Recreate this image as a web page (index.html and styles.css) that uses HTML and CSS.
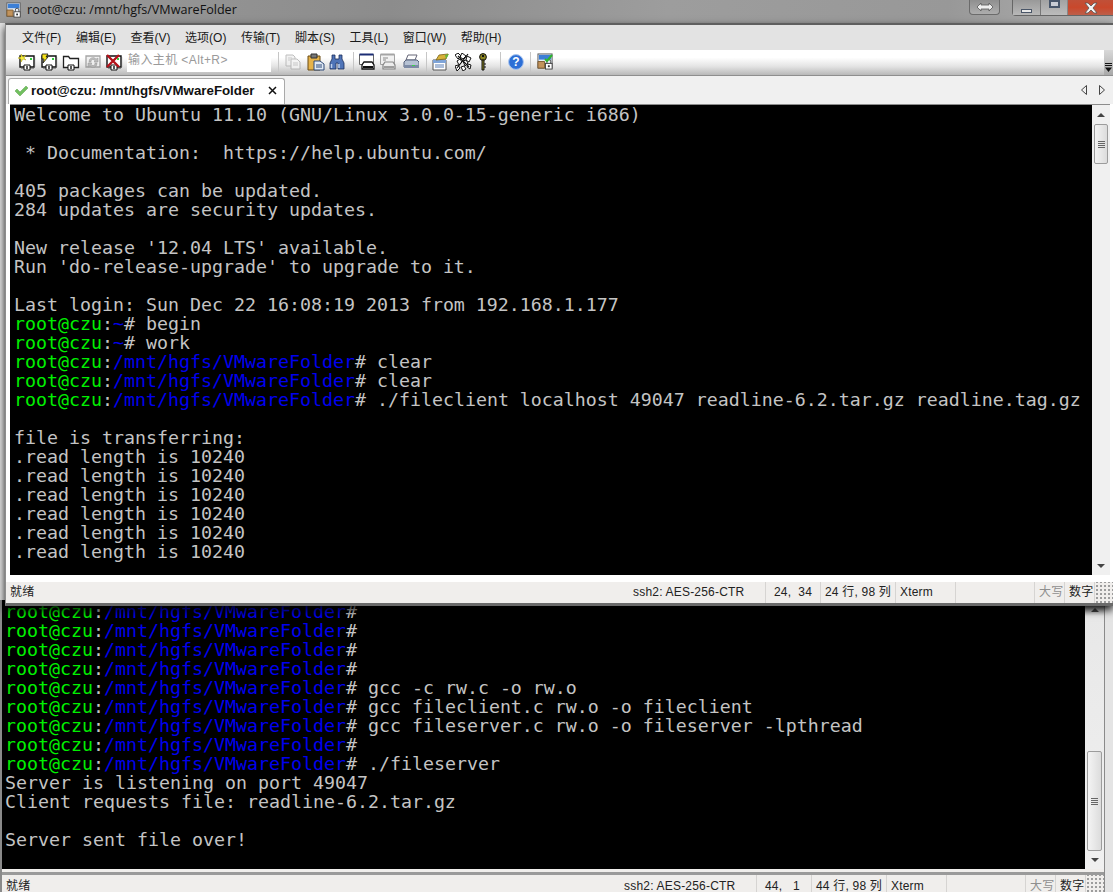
FILE: index.html
```html
<!DOCTYPE html>
<html lang="zh">
<head>
<meta charset="utf-8">
<title>root@czu: /mnt/hgfs/VMwareFolder</title>
<link rel="stylesheet" href="styles.css">
</head>
<body>
<svg class="defs" width="0" height="0" aria-hidden="true">
  <symbol id="host" viewBox="0 0 18 18">
    <path d="M2 3h14v11H2z" fill="#fff" stroke="#111" stroke-width="1.4"/>
    <path d="M16.500 4v10M3 15h13" stroke="#555" stroke-width="1.2"/>
    <rect x="12" y="5" width="2" height="2" fill="#2fce3c"/>
    <path d="M6 12h6v5H6z" fill="#fff" stroke="#111"/>
    <path d="M9 13v3" stroke="#111" stroke-width="1.400"/>
  </symbol>
  <symbol id="folderhost" viewBox="0 0 18 18">
    <path d="M1.500 3.500h5l1.500 2h8.500v9h-15z" fill="#fff" stroke="#222" stroke-width="1.300"/>
    <path d="M6 12h6v5H6z" fill="#fff" stroke="#111"/>
    <path d="M9 13v3" stroke="#111" stroke-width="1.400"/>
  </symbol>
  <symbol id="lockwin" viewBox="0 0 18 18">
    <rect x="1" y="1" width="15" height="15" fill="#e8eef6" stroke="#5b5b5b"/>
    <rect x="2" y="2" width="13" height="5" fill="#3c7fd6"/>
    <path d="M1 9h7v7H1z" fill="#c2935c" stroke="#7b5a30"/>
    <rect x="9" y="11" width="7" height="6" fill="#fff" stroke="#444"/>
    <path d="M10.500 11V9a2 2 0 0 1 4 0v2" fill="none" stroke="#444"/>
    <rect x="11.500" y="13" width="2" height="2" fill="#333"/>
  </symbol>
</svg>

<main class="desktop">
  <section class="window window-back">
    <div class="term-area term-area-back">
      <pre class="term term-back"><span class="g">root@czu</span>:<span class="b">/mnt/hgfs/VMwareFolder</span>#
<span class="g">root@czu</span>:<span class="b">/mnt/hgfs/VMwareFolder</span>#
<span class="g">root@czu</span>:<span class="b">/mnt/hgfs/VMwareFolder</span>#
<span class="g">root@czu</span>:<span class="b">/mnt/hgfs/VMwareFolder</span>#
<span class="g">root@czu</span>:<span class="b">/mnt/hgfs/VMwareFolder</span># gcc -c rw.c -o rw.o
<span class="g">root@czu</span>:<span class="b">/mnt/hgfs/VMwareFolder</span># gcc fileclient.c rw.o -o fileclient
<span class="g">root@czu</span>:<span class="b">/mnt/hgfs/VMwareFolder</span># gcc fileserver.c rw.o -o fileserver -lpthread
<span class="g">root@czu</span>:<span class="b">/mnt/hgfs/VMwareFolder</span>#
<span class="g">root@czu</span>:<span class="b">/mnt/hgfs/VMwareFolder</span># ./fileserver
Server is listening on port 49047
Client requests file: readline-6.2.tar.gz

Server sent file over!</pre>
      <div class="scrollbar scrollbar-back">
        <span class="arrow-up"></span>
        <div class="track track-back"><div class="thumb thumb-back"><i></i><i></i><i></i><i></i></div></div>
        <span class="arrow-down"></span>
      </div>
    </div>
    <footer class="status status-back">
      <span class="cell cell-main">就绪</span>
      <span class="cell cell-ssh">ssh2: AES-256-CTR</span>
      <span class="cell cell-pos">44,&nbsp;&nbsp;&nbsp;1</span>
      <span class="cell cell-size">44 行, 98 列</span>
      <span class="cell cell-term">Xterm</span>
      <span class="cell cell-gap"></span>
      <span class="cell cell-key muted">大写</span>
      <span class="cell cell-key">数字</span>
      <span class="grip"></span>
    </footer>
  </section>

  <header class="titlebar">
    <svg class="title-icon" width="16" height="16"><use href="#lockwin"/></svg>
    <span class="title-text">root@czu: /mnt/hgfs/VMwareFolder</span>
    <span class="spacer"></span>
    <span class="capbtn capbtn-resize">
      <svg width="18" height="10" viewBox="0 0 18 10"><path d="M1 5l4-4v2h8V1l4 4-4 4V7H5v2z" fill="#eee" stroke="#555" stroke-width=".8"/></svg>
    </span>
    <span class="capgroup">
      <span class="capbtn capbtn-min"><i></i></span>
      <span class="capbtn capbtn-max"><i></i></span>
      <span class="capbtn capbtn-close">
        <svg width="14" height="12" viewBox="0 0 14 12"><path d="M1 1h3l3 3 3-3h3L9 6l4 5h-3L7 8l-3 3H1l4-5z" fill="#f4f4f4" stroke="#555" stroke-width=".8"/></svg>
      </span>
    </span>
  </header>

  <section class="window window-front">
    <nav class="menubar">
      <span>文件(F)</span><span>编辑(E)</span><span>查看(V)</span><span>选项(O)</span><span>传输(T)</span><span>脚本(S)</span><span>工具(L)</span><span>窗口(W)</span><span>帮助(H)</span>
    </nav>
    <div class="toolbar">
      <svg class="ic" width="18" height="18"><use href="#host"/><path d="M3 1l2 3 3-2-2 3 2 2-3-1-2 3V6L0 5l3-1z" fill="#f7ef3a" stroke="#a89a10" stroke-width=".5"/></svg>
      <svg class="ic ic-2" width="18" height="18"><use href="#host"/><path d="M2 1h6L6 4h2L3 10l1-4H2z" fill="#f6e21c" stroke="#111" stroke-width=".8"/></svg>
      <svg class="ic ic-3" width="18" height="18"><use href="#folderhost"/></svg>
      <svg class="ic ic-4 dim" width="18" height="18" viewBox="0 0 18 18"><path d="M2 3h14v11H2z" fill="#eee" stroke="#888" stroke-width="1.300"/><path d="M5 9a4 4 0 0 1 7-3l2-1v4h-4l1-1a2 2 0 0 0-4 1zM13 10a4 4 0 0 1-7 3l-2 1v-4h4l-1 1a2 2 0 0 0 4-1z" fill="#aaa" stroke="#777" stroke-width=".5"/></svg>
      <svg class="ic ic-5" width="18" height="18"><use href="#host"/><path d="M2 2l12 12M14 2L2 14" stroke="#b5121b" stroke-width="2.400"/></svg>
      <span class="hostbox">输入主机 &lt;Alt+R&gt;</span>
      <span class="sep sep-a"></span>
      <svg class="ic ic-copy dim" width="16" height="16" viewBox="0 0 16 16"><path d="M1 1h7l2 2v9H1z" fill="#eee" stroke="#aaa"/><path d="M6 5h6l3 3v7H6z" fill="#f4f4f4" stroke="#aaa"/><path d="M3 4h4M3 6h2M8 9h5M8 11h5" stroke="#bbb"/></svg>
      <svg class="ic ic-paste" width="18" height="18" viewBox="0 0 18 18"><path d="M1 3h12v14H1z" fill="#e5b24a" stroke="#6a4a12"/><path d="M4 1h6v4H4z" fill="#777" stroke="#333"/><path d="M7 8h6l4 3v6H7z" fill="#dfe8f4" stroke="#2f4b78"/><path d="M9 12h6M9 14h6" stroke="#2f4b78"/></svg>
      <svg class="ic ic-find" width="16" height="16" viewBox="0 0 16 16"><path d="M3 1h3v4h4V1h3v4l2 4v6H9V9H7v6H1V9l2-4z" fill="#4f74b8" stroke="#1d2f5a" stroke-width=".8"/><path d="M2.500 10v4M10 10v4" stroke="#bcd0ef" stroke-width="1.500"/></svg>
      <span class="sep sep-b"></span>
      <svg class="ic ic-print1" width="17" height="18" viewBox="0 0 17 18"><path d="M.5 1.500h14v10H.5z" fill="#fff" stroke="#666"/><path d="M.5 1.500h14" stroke="#1b2c74" stroke-width="2"/><path d="M5 9h8l2 3v4H3v-4z" fill="#fff" stroke="#111" stroke-width="1.300"/><path d="M4 14h10" stroke="#111" stroke-width="2"/></svg>
      <svg class="ic ic-print2 dim" width="17" height="18" viewBox="0 0 17 18"><path d="M.5 1.500h14v10H.5z" fill="#eee" stroke="#888"/><path d="M.5 1.500h14" stroke="#888" stroke-width="2"/><path d="M3 5h5M3 7h3" stroke="#666"/><path d="M5 9h8l2 3v4H3v-4z" fill="#eee" stroke="#666" stroke-width="1.200"/><path d="M4 14h10" stroke="#666" stroke-width="1.500"/></svg>
      <svg class="ic ic-print3" width="16" height="16" viewBox="0 0 16 16"><path d="M5 1h9l-2 5H3z" fill="#fff" stroke="#667"/><path d="M3 6h11l2 2v5H1V8z" fill="#b6c2d4" stroke="#55607a"/><path d="M1 11h15v3H1z" fill="#7d8ba6"/><rect x="9" y="11" width="3" height="1" fill="#3bd04a"/></svg>
      <span class="sep sep-c"></span>
      <svg class="ic ic-options" width="18" height="18" viewBox="0 0 18 18"><path d="M1 7h13v10H1z" fill="#fff" stroke="#555"/><path d="M1 7h13v3H1z" fill="#7fa4d8"/><path d="M3 12h9M3 14h9" stroke="#5a7fb5"/><path d="M4 7l3-5 9-1-2 5z" fill="#d8b23a" stroke="#7a6218" stroke-width=".8"/><path d="M13 2l4-1-3 5z" fill="#66b53a"/></svg>
      <svg class="ic ic-keys" width="17" height="18" viewBox="0 0 17 18"><path d="M0 2l3-2 3 3-3 3zM7 0l4 3-3 3-3-2zM12 3l4 2-2 4-3-2zM2 8l3-2 2 3-3 3zM8 8l3-1 2 3-3 3zM13 11l3 1-1 4-3-2zM0 13l3-1 2 3-3 3zM6 14l3-1 2 3-3 2z" fill="#fff" stroke="#111"/><path d="M3 3l11 11M13 1L2 15" stroke="#111" stroke-width="1.200"/></svg>
      <svg class="ic ic-key" width="8" height="18" viewBox="0 0 8 18"><circle cx="4" cy="4" r="3.400" fill="#8a8420" stroke="#111"/><rect x="3" y="2" width="2" height="2" fill="#111"/><path d="M3 7h2v10H3zM5 11h2M5 14h2" fill="#8a8420" stroke="#111"/></svg>
      <span class="sep sep-d"></span>
      <svg class="ic ic-help" width="16" height="16" viewBox="0 0 16 16"><circle cx="8" cy="8" r="7.400" fill="#2d6fd6" stroke="#a9c4ee"/><text x="8" y="12" class="help-q">?</text></svg>
      <span class="sep sep-e"></span>
      <svg class="ic ic-last" width="17" height="17"><use href="#lockwin"/><path d="M8 6l2 2 5-6" fill="none" stroke="#2cb62c" stroke-width="2"/></svg>
      <span class="spacer"></span>
      <span class="chevron">
        <svg width="9" height="10" viewBox="0 0 9 10"><path d="M1 .5h7M1 2.500h7" stroke="#111"/><path d="M1 4.500h7L4.500 9z" fill="#111"/></svg>
      </span>
    </div>
    <div class="tabrow">
      <div class="tab">
        <svg class="tab-check" width="15" height="12" viewBox="0 0 15 12"><path d="M1 6l2-2 3 3 6-6 2 2-8 8z" fill="#71c05f" stroke="#5a9d4a" stroke-width=".5"/></svg>
        <span class="tab-title">root@czu: /mnt/hgfs/VMwareFolder</span>
        <svg class="tab-close" width="9" height="9" viewBox="0 0 9 9"><path d="M1 1l7 7M8 1L1 8" stroke="#111" stroke-width="1.500"/></svg>
      </div>
      <span class="spacer"></span>
      <svg class="nav nav-left" width="6" height="10" viewBox="0 0 6 10"><path d="M5.500 .5v9L.5 5z" fill="#f0f0f0" stroke="#444"/></svg>
      <svg class="nav nav-right" width="6" height="10" viewBox="0 0 6 10"><path d="M.5 .5v9l5-4.500z" fill="#f0f0f0" stroke="#444"/></svg>
    </div>
    <div class="term-frame">
      <div class="term-area">
        <pre class="term term-front">Welcome to Ubuntu 11.10 (GNU/Linux 3.0.0-15-generic i686)

 * Documentation:  https://help.ubuntu.com/

405 packages can be updated.
284 updates are security updates.

New release '12.04 LTS' available.
Run 'do-release-upgrade' to upgrade to it.

Last login: Sun Dec 22 16:08:19 2013 from 192.168.1.177
<span class="g">root@czu</span>:<span class="b">~</span># begin
<span class="g">root@czu</span>:<span class="b">~</span># work
<span class="g">root@czu</span>:<span class="b">/mnt/hgfs/VMwareFolder</span># clear
<span class="g">root@czu</span>:<span class="b">/mnt/hgfs/VMwareFolder</span># clear
<span class="g">root@czu</span>:<span class="b">/mnt/hgfs/VMwareFolder</span># ./fileclient localhost 49047 readline-6.2.tar.gz readline.tag.gz

file is transferring:
.read length is 10240
.read length is 10240
.read length is 10240
.read length is 10240
.read length is 10240
.read length is 10240</pre>
        <div class="scrollbar scrollbar-front">
          <span class="arrow-up"></span>
          <div class="track"><div class="thumb thumb-front"><i></i><i></i><i></i><i></i></div></div>
          <span class="arrow-down"></span>
        </div>
      </div>
    </div>
    <footer class="status status-front">
      <span class="cell cell-main">就绪</span>
      <span class="cell cell-ssh">ssh2: AES-256-CTR</span>
      <span class="cell cell-pos">24,&nbsp;&nbsp;34</span>
      <span class="cell cell-size">24 行, 98 列</span>
      <span class="cell cell-term">Xterm</span>
      <span class="cell cell-gap"></span>
      <span class="cell cell-key muted">大写</span>
      <span class="cell cell-key">数字</span>
      <span class="grip"></span>
    </footer>
  </section>
</main>
</body>
</html>
```
FILE: styles.css
```css
* { box-sizing: border-box; }
html, body { margin: 0; height: 100%; overflow: hidden; }
body { font-family: "Liberation Sans", "Noto Sans CJK SC", sans-serif; font-size: 12px; color: #111; background: #c9c9c9; }
.defs { position: absolute; }
.desktop { position: relative; width: 1113px; height: 892px; overflow: hidden; background: #e4e4e4; }
.spacer { flex: 1; }

/* title strip */
.titlebar { position: absolute; left: 0; top: 0; width: 1113px; height: 23px; display: flex; align-items: flex-start; background: linear-gradient(100deg, #9a9a9a 0%, #8c8c8c 35%, #9d9d9d 60%, #989898 85%, #b0b0b0 100%); }
.title-icon { margin: 2px 0 0 6px; }
.title-text { margin: 1px 0 0 5px; font-family: "Open Sans", "Noto Sans CJK SC", sans-serif; font-size: 12.6px; line-height: 17px; color: #111; }
.capbtn { display: flex; align-items: center; justify-content: center; height: 15px; }
.capbtn-resize { width: 31px; margin-right: 12px; border: 1px solid #6b6b6b; border-top: 0; border-radius: 0 0 4px 4px; background: linear-gradient(#8f8f8f, #adadad); }
.capgroup { display: flex; margin-right: 0; border: 1px solid #666; border-top: 0; border-right: 0; border-radius: 0 0 0 4px; }
.capbtn-min { width: 28px; background: linear-gradient(#999, #b8b8b8); border-right: 1px solid #777; align-items: flex-end; padding-bottom: 2px; }
.capbtn-min i { width: 11px; height: 4px; background: #e8e8e8; border: 1px solid #4a5668; }
.capbtn-max { width: 27px; background: linear-gradient(#a2a2a2, #bcbcbc); border-right: 1px solid #888; align-items: flex-start; }
.capbtn-max i { width: 11px; height: 8px; background: #c8ccd4; border: 2px solid #47556a; }
.capbtn-close { width: 45px; background: linear-gradient(#c05038, #c9482c 50%, #bd5f4a); }

/* windows */
.window { position: absolute; display: flex; flex-direction: column; }
.window-front { left: 5px; top: 23px; width: 1108px; height: 583px; background: #f0f0f0; border-top: 2px solid #5f5f5f; border-left: 1px solid #8d8d8d; border-bottom: 3px solid #6a6a6a; box-shadow: 0 4px 8px rgba(0, 0, 0, .9); }
.window-back { left: 0; top: 600px; width: 1105px; height: 292px; background: #f0eeec; border-left: 2px solid #8a8a8a; border-right: 1px solid #8a8a8a; }

/* menu */
.menubar { height: 25px; flex: none; display: flex; align-items: center; gap: 14.6px; padding: 0 0 3px 16px; background: #e3e3e3; font-size: 12px; color: #1a1a1a; white-space: nowrap; }

/* toolbar */
.toolbar { height: 26px; flex: none; display: flex; align-items: center; padding-bottom: 2px; background: linear-gradient(#fff 0, #fff 30%, #e4e4e4 65%, #b8b8b8 100%); border-bottom: 1px solid #8e8e8e; }
.ic { flex: none; display: block; margin-left: 4px; }
.toolbar > .ic:first-child { margin-left: 12px; }
.dim { opacity: .75; }
.ic-5 { margin-left: 3px; }
.hostbox { flex: none; width: 144px; height: 22px; margin-left: 4px; padding: 1px 0 0 1px; background: #fff; color: #9a9a9a; font-size: 12px; letter-spacing: .4px; line-height: 18px; align-self: flex-start; white-space: nowrap; }
.sep { flex: none; width: 1px; height: 20px; background: #c6c6c6; }
.sep-a { margin-left: 7px; }
.ic-copy { margin-left: 6px; }
.ic-paste { margin-left: 6px; }
.ic-find { margin-left: 4px; }
.sep-b { margin-left: 8px; }
.ic-print1 { margin-left: 5px; }
.ic-print2 { margin-left: 4px; }
.ic-print3 { margin-left: 6px; }
.sep-c { margin-left: 7px; }
.ic-options { margin-left: 5px; }
.ic-keys { margin-left: 5px; }
.ic-key { margin-left: 7px; }
.sep-d { margin-left: 13px; }
.ic-help { margin-left: 7px; }
.sep-e { margin-left: 6px; }
.ic-last { margin-left: 6px; }
.help-q { font: bold 12px "Liberation Sans", sans-serif; fill: #fff; text-anchor: middle; }
.chevron { flex: none; width: 9px; height: 25px; margin-bottom: -2px; display: flex; align-items: flex-end; padding-bottom: 2px; background: linear-gradient(#d8d8d8, #a8a8a8); }

/* tabs */
.tabrow { height: 28px; flex: none; display: flex; align-items: flex-end; padding-left: 2px; background: #f0f0f0; }
.tab { width: 277px; height: 26px; display: flex; align-items: center; padding: 0 0 2px 5px; background: #fff; border: 1px solid #a9a9a9; border-bottom: 0; border-radius: 3px 3px 0 0; }
.tab-check { flex: none; }
.tab-title { margin-left: 2px; font-family: "Liberation Sans", sans-serif; font-weight: 700; font-size: 13.3px; white-space: nowrap; color: #111; }
.tab-close { flex: none; margin-left: 13px; }
.nav { flex: none; align-self: center; }
.nav-left { margin-right: 12px; }
.nav-right { margin-right: 8px; }

/* terminal */
.term-frame { flex: 1; min-height: 0; padding: 0 3px 6px 4px; background: #fff; }
.term-area { height: 100%; display: flex; border-top: 1px solid #8c8c8c; background: #000; }
.term-area-back { flex: 1; min-height: 0; height: auto; margin-bottom: 3px; border-top: 0; }
.term { flex: 1; margin: 0; overflow: hidden; font-family: "DejaVu Sans Mono", monospace; font-size: 18.27px; line-height: 19px; color: #c4c4c4; background: #000; white-space: pre; }
.term-front { padding: 0 0 0 4px; }
.term-back { padding: 2px 0 0 3px; }
.g { color: #00f000; }
.b { color: #0000ee; }

/* scrollbars */
.scrollbar { flex: none; display: flex; flex-direction: column; align-items: center; background: #f0f0f0; }
.scrollbar-front { width: 18px; }
.scrollbar-back { width: 19px; background: linear-gradient(#8a8a8a 0, #e8e8e8 16px, #f0f0f0 100%); }
.track { flex: 1; width: 100%; padding: 3px 2px 0 2px; }
.track-back { display: flex; align-items: flex-end; padding-bottom: 3px; }
.thumb { width: 100%; display: flex; flex-direction: column; align-items: center; justify-content: center; gap: 1px; border: 1px solid #9c9c9c; border-radius: 2px; background: linear-gradient(90deg, #f4f4f4, #dcdcdc); }
.thumb-front { height: 40px; }
.thumb-back { height: 100px; }
.thumb i { width: 7px; height: 1px; background: #666; }
.arrow-up, .arrow-down { flex: none; width: 0; height: 0; margin: 8px 0 4px; border-left: 4px solid transparent; border-right: 4px solid transparent; }
.arrow-up { border-bottom: 4px solid #444; }
.arrow-down { border-top: 4px solid #444; margin: 4px 0 7px; }

/* status */
.status { height: 22px; flex: none; display: flex; align-items: stretch; background: #f0eeec; border-top: 1px solid #fff; font-family: "Liberation Sans", "Noto Sans CJK SC", sans-serif; font-size: 12px; letter-spacing: .2px; line-height: 21px; color: #222; white-space: nowrap; }
.status-back { height: 20px; border-top: 3px solid #9a9a9a; line-height: 23px; }
.cell { flex: none; padding-left: 4px; border-right: 1px solid #d6d4d2; overflow: hidden; }
.cell-main { flex: 1; padding-left: 4px; border-right: 0; }
.cell-ssh { width: 134px; padding-left: 1px; }
.cell-pos { width: 55px; padding-left: 8px; }
.cell-size { width: 75px; }
.cell-term { width: 60px; }
.cell-gap { width: 79px; }
.cell-key { width: 30px; }
.muted { color: #8f8f8f; }
.grip { flex: none; width: 18px; background: radial-gradient(circle, #9d9d9d 1px, transparent 1.2px) 0 10px / 4px 4px; }
```
